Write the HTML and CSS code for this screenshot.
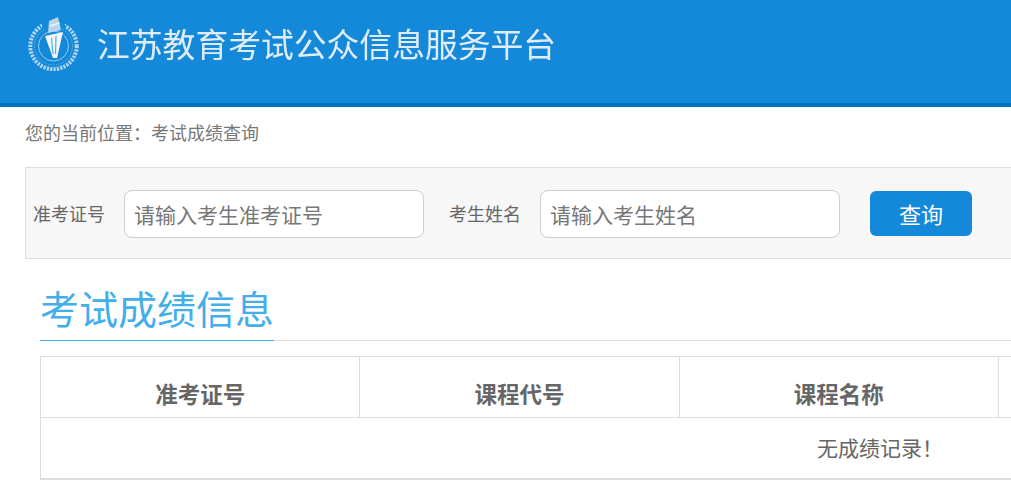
FILE: index.html
```html
<!DOCTYPE html>
<html lang="zh">
<head>
    <meta charset="UTF-8">
    <meta name="viewport" content="width=device-width, initial-scale=1.0">
    <title>江苏教育考试公众信息服务平台</title>
    <link rel="stylesheet" href="styles.css">
</head>
<body>
    <div class="header">
        <svg class="logo" viewBox="0 0 56 56" width="56" height="56" aria-hidden="true">
            <circle cx="27.5" cy="31" r="23.2" fill="none" stroke="#dbeaf6" stroke-width="4" stroke-dasharray="2.2 1.2" stroke-opacity=".8"/>
            <circle cx="27.5" cy="31" r="19" fill="none" stroke="#dbeaf6" stroke-width="1" stroke-dasharray="1.2 1.4" stroke-opacity=".45"/>
            <path d="M16 4 H39 V13 L33 15 H22 L16 13 Z" fill="#1589d9"/>
            <circle cx="27.5" cy="31" r="15" fill="none" stroke="#e3eff8" stroke-width=".9" stroke-opacity=".7"/>
            <path d="M17 20 H38 V30 H17 Z" fill="#1589d9"/>
            <path d="M19 21 L37 17 L31 43 L27 43 Z" fill="#f2f7fb"/>
            <path d="M25.5 23 L27 39 M30 21 L29.5 39" stroke="#1589d9" stroke-width="1.2" stroke-opacity=".7"/>
            <path d="M23 6 L32 2 L35 15 L22 18 Z" fill="#b9d5ec"/>
            <path d="M24 11 L33.5 8" stroke="#eef5fb" stroke-width="1.6"/>
        </svg>
        <div class="site-name">江苏教育考试公众信息服务平台</div>
    </div>
    <div class="crumb">您的当前位置：考试成绩查询</div>
    <form class="search-box">
        <label class="search-label">准考证号</label>
        <input class="search-input" type="text" placeholder="请输入考生准考证号">
        <label class="search-label search-label-second">考生姓名</label>
        <input class="search-input" type="text" placeholder="请输入考生姓名">
        <button class="search-btn" type="button">查询</button>
    </form>
    <div class="section-title"><span>考试成绩信息</span></div>
    <table class="score-table">
        <tr>
            <th>准考证号</th>
            <th>课程代号</th>
            <th>课程名称</th>
            <th></th>
            <th class="last-col"></th>
        </tr>
        <tr>
            <td colspan="5">无成绩记录！</td>
        </tr>
    </table>
</body>
</html>
```

FILE: styles.css
```css
html {
    overflow: hidden;
}
body {
    width: 1731px;
    margin: 0;
    font-family: "Noto Sans CJK SC", "Liberation Sans", sans-serif;
    color: #666;
    background-color: #fff;
}
.header {
    display: flex;
    align-items: center;
    height: 86px;
    padding: 0 0 17px 26px;
    background-color: #1589d9;
    border-bottom: 4px solid #0071bc;
}
.logo {
    flex: none;
    margin-right: 15px;
    filter: blur(0.4px);
}
.site-name {
    font-size: 32.8px;
    line-height: 44px;
    color: #e0edf8;
    white-space: nowrap;
    filter: blur(0.3px);
}
.crumb {
    margin-left: 25px;
    height: 60px;
    font-size: 18px;
    line-height: 50px;
    color: #777;
}
.search-box {
    display: flex;
    align-items: center;
    height: 90px;
    margin-left: 25px;
    background-color: #f7f7f7;
    border: 1px solid #ddd;
}
.search-label {
    flex: none;
    width: 98px;
    padding-left: 7px;
    box-sizing: border-box;
    font-size: 18px;
    line-height: 24px;
}
.search-label-second {
    width: 116px;
    padding-left: 25px;
}
.search-input {
    flex: none;
    width: 300px;
    height: 48px;
    margin-top: 2px;
    padding: 0 9px;
    box-sizing: border-box;
    font-family: inherit;
    font-size: 21px;
    color: #666;
    background-color: #fff;
    border: 1px solid #ccc;
    border-radius: 8px;
}
.search-input::placeholder {
    color: #777;
    opacity: 1;
}
.search-btn {
    flex: none;
    width: 102px;
    height: 45px;
    margin-left: 30px;
    padding: 0;
    font-family: inherit;
    font-size: 22px;
    color: #fff;
    background-color: #1589d9;
    border: none;
    border-radius: 6px;
    cursor: pointer;
}
.section-title {
    margin: 20px 0 15px 40px;
    height: 61px;
    border-bottom: 1px solid #ddd;
}
.section-title span {
    display: inline-block;
    height: 61px;
    font-size: 39px;
    line-height: 56px;
    color: #44aeea;
    border-bottom: 1px solid #44aeea;
}
.score-table {
    width: 1680px;
    margin-left: 40px;
    border-collapse: collapse;
    table-layout: fixed;
    border-bottom: 2px solid #ddd;
}
.score-table th,
.score-table td {
    border: 1px solid #ddd;
    text-align: center;
}
.score-table th {
    width: 319.3px;
    height: 61px;
    padding: 12px 0 0;
    box-sizing: border-box;
    font-size: 22.5px;
    line-height: 30px;
}
.score-table th.last-col {
    width: auto;
}
.score-table td {
    height: 57px;
    padding: 0 0 3px;
    font-size: 21px;
    line-height: 30px;
}
```
